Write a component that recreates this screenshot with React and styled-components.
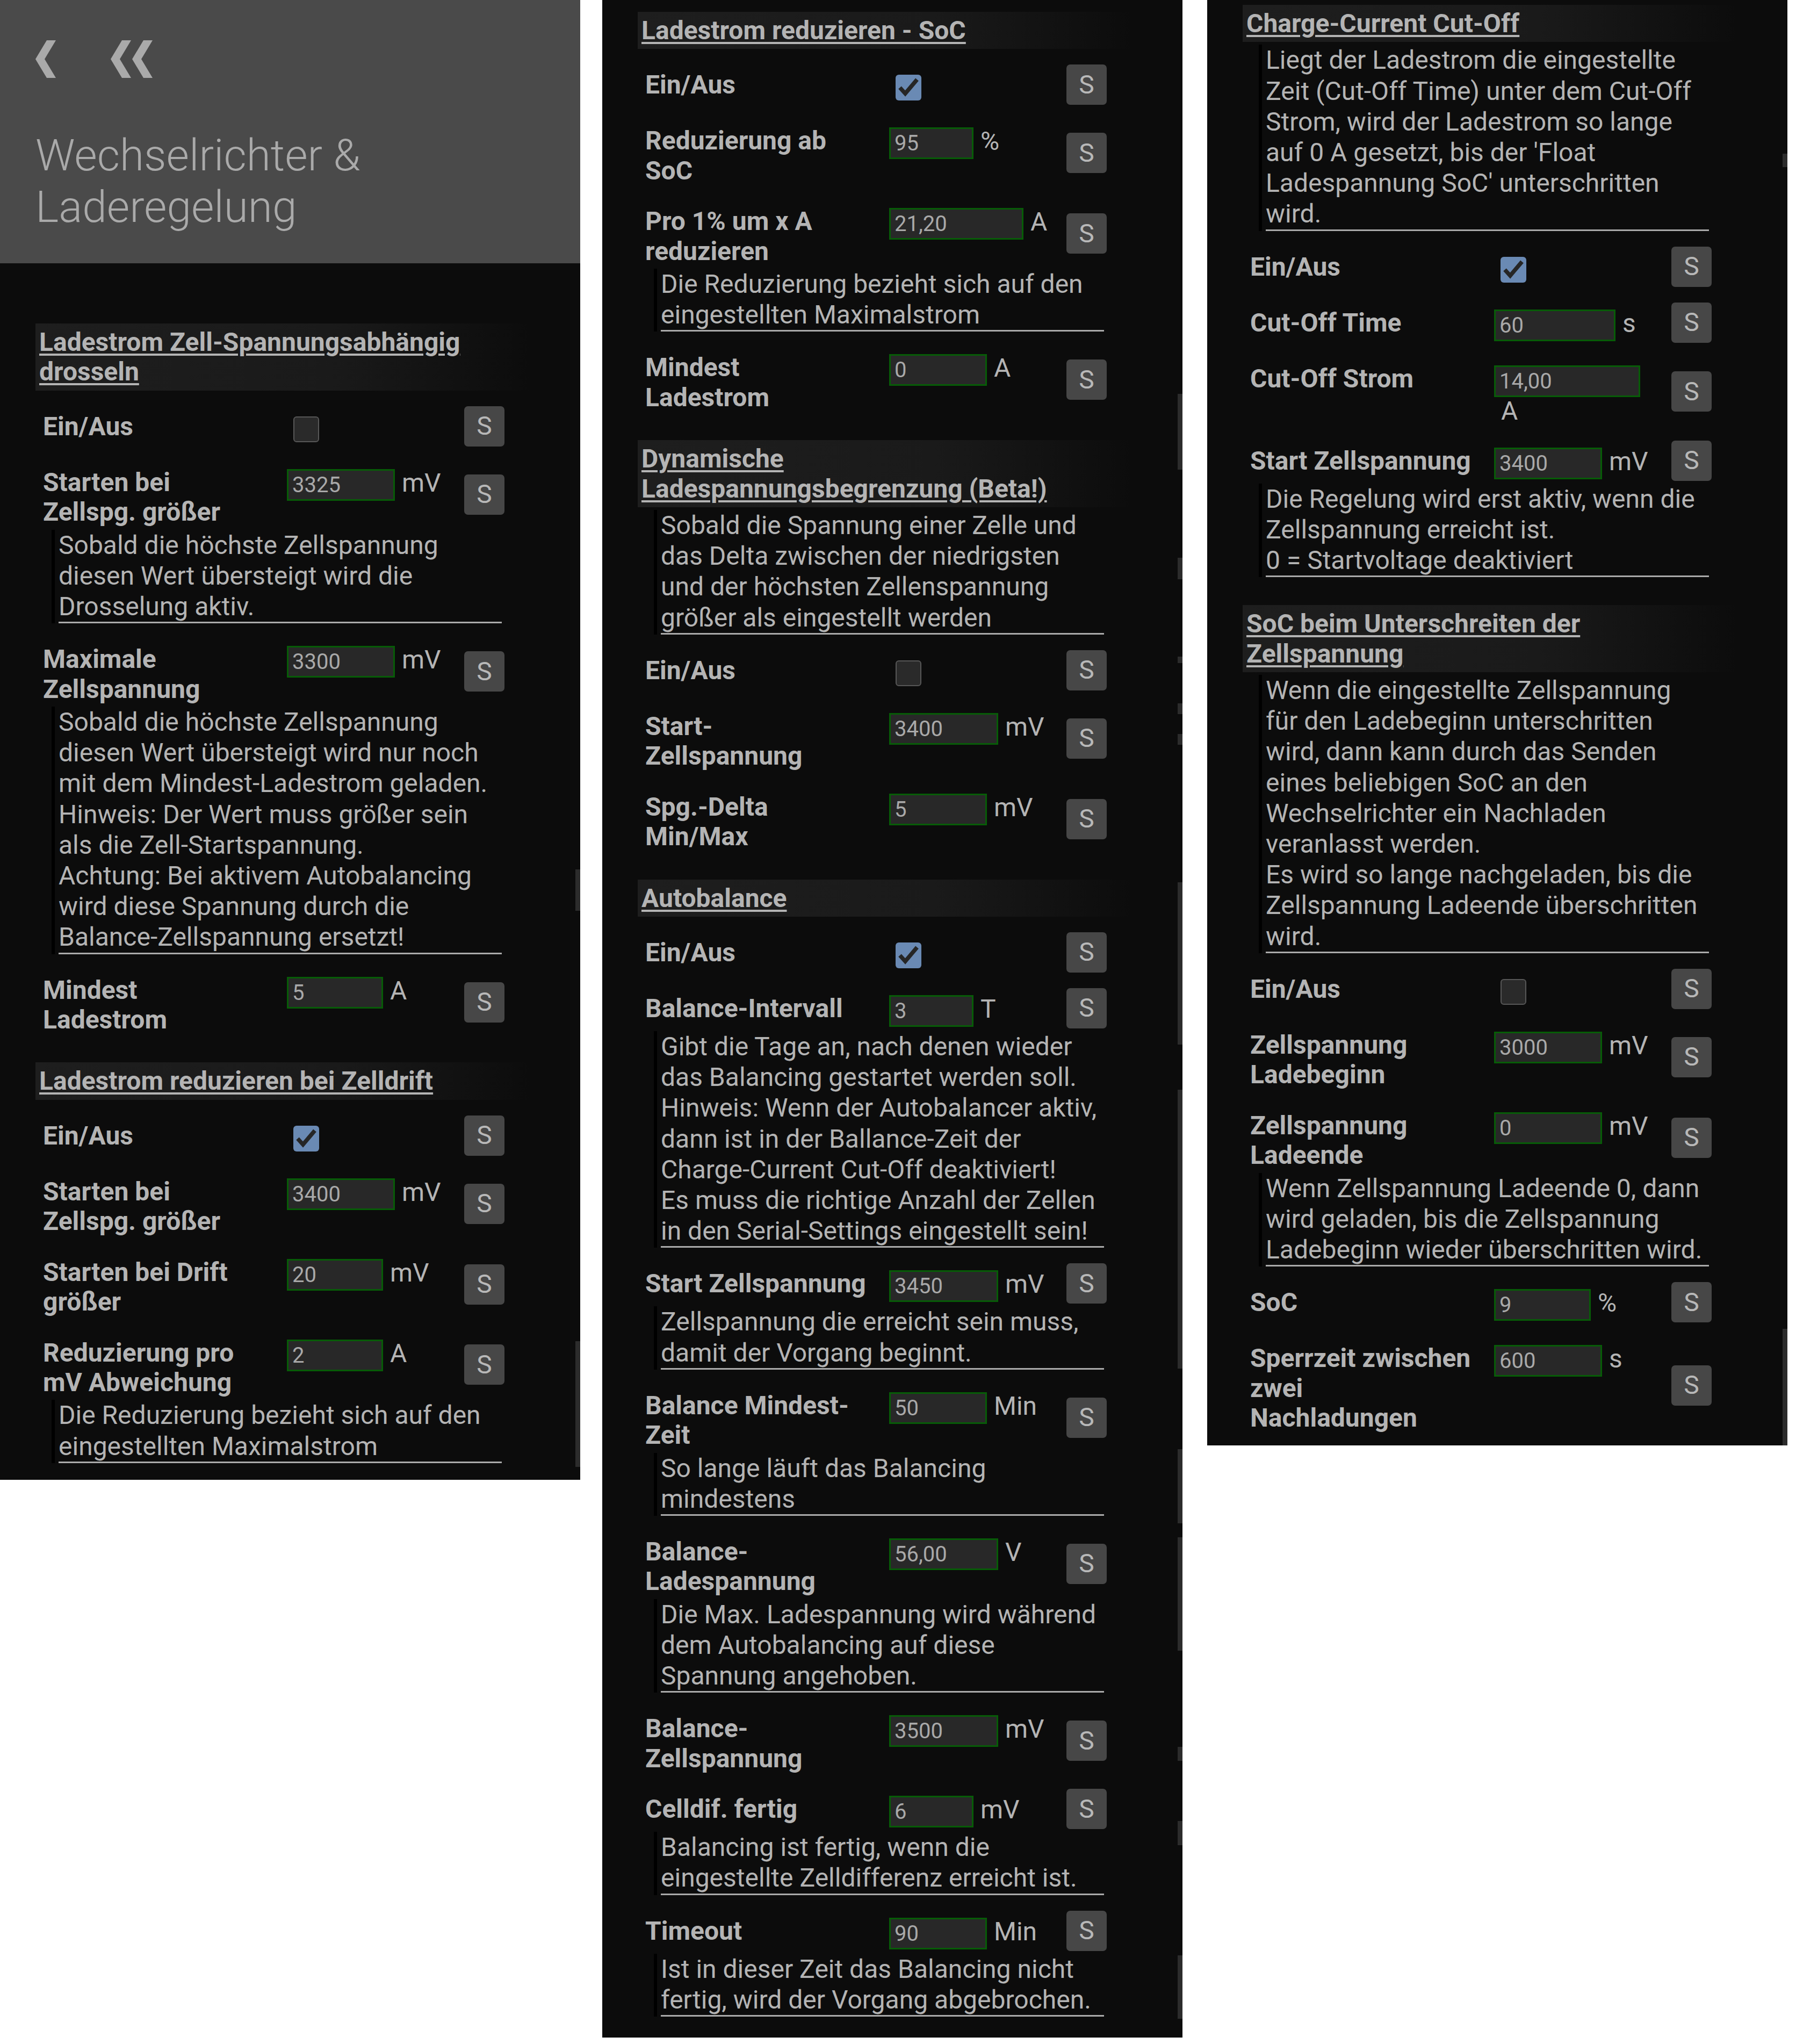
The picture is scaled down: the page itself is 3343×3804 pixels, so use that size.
import React from "react"
import styled, { createGlobalStyle } from "styled-components"

const GlobalStyle = createGlobalStyle`
  html, body {
    margin: 0;
    padding: 0;
    background: #ffffff;
  }
  body {
    font-family: Roboto, "Liberation Sans", sans-serif;
  }
`

const FONT = `Roboto, "Liberation Sans", sans-serif`

const Page = styled.div`
  display: flex;
  align-items: flex-start;
  width: 3343px;
  height: 3804px;
  background: #ffffff;
`

const Screen = styled.div`
  position: relative;
  flex: none;
  width: 1080px;
  height: ${(p) => p.height}px;
  margin-left: ${(p) => p.offset}px;
  background: #0c0c0c;
  color: #b4b4b4;
  font-family: ${FONT};
  font-size: 48px;
  overflow: hidden;
`

const TopBar = styled.header`
  height: 490px;
  box-sizing: border-box;
  background: #4a4a4a;
  padding: 75px 0 0 66px;
`

const NavIcons = styled.div`
  display: flex;
  gap: 102px;
  height: 70px;
  color: #aaaaaa;
`

const Title = styled.h1`
  margin: 96px 0 0;
  font-size: 82px;
  font-weight: 300;
  line-height: 96px;
  color: #aaaaaa;
`

const Body = styled.div`
  padding-top: ${(p) => p.top}px;
`

const SectionHead = styled.h2`
  margin: 52px 14px 0 66px;
  padding: 7px;
  font-size: 48px;
  font-weight: 700;
  line-height: 55.4px;
  white-space: nowrap;
  background: linear-gradient(90deg, #1e1e1e 0%, #1a1a1a 55%, rgba(12, 12, 12, 0) 92%);
  &:first-child {
    margin-top: 0;
  }
  span {
    text-decoration: underline;
    text-decoration-thickness: 4px;
    text-underline-offset: 5px;
  }
`

const Block = styled.div`
  margin-top: 29px;
`

const Row = styled.div`
  display: grid;
  grid-template-columns: 454px 330px 75px;
  align-items: start;
  min-height: 75px;
  padding-left: 80px;
`

const Label = styled.div`
  padding-top: 10px;
  font-weight: 700;
  line-height: 55.4px;
  white-space: nowrap;
`

const Control = styled.div`
  display: flex;
  flex-wrap: wrap;
  align-items: flex-start;
  max-width: 300px;
  margin-top: ${(p) => (p.check ? 19 : 13)}px;
  padding-left: ${(p) => (p.check ? 12 : 0)}px;
`

const ValueInput = styled.input`
  box-sizing: border-box;
  width: ${(p) => p.w}px;
  height: 59px;
  margin: 0;
  padding: 0 7px;
  border: 3px solid #075c07;
  border-radius: 0;
  background: #282828;
  color: #a9a9a9;
  font-family: ${FONT};
  font-size: 40px;
  outline: none;
`

const Unit = styled.span`
  margin-left: 13px;
  line-height: 52px;
  white-space: nowrap;
`

const Check = styled.div`
  box-sizing: border-box;
  width: 48px;
  height: 48px;
  border-radius: 6px;
  background: ${(p) => (p.on ? "#6a8ab4" : "#2a2a2a")};
  border: ${(p) => (p.on ? "none" : "2.5px solid #575757")};
  display: flex;
  align-items: center;
  justify-content: center;
`

const SaveButton = styled.div`
  align-self: center;
  width: 75px;
  height: 75px;
  border-radius: 7px;
  background: #474747;
  color: #b8b8b8;
  display: flex;
  align-items: center;
  justify-content: center;
  font-size: 48px;
  line-height: 1;
`

const Desc = styled.div`
  box-sizing: border-box;
  width: 838px;
  margin: 5px 0 0 96px;
  padding-left: 7px;
  border-left: 6px solid #000000;
`

const DescText = styled.div`
  border-bottom: 3px solid #aaaaaa;
  line-height: 57.2px;
  white-space: nowrap;
`

const ScrollMark = styled.div`
  position: absolute;
  right: 0;
  width: 9px;
  background: #2c2c2c;
`

const Chevron = ({ double }) => (
  <svg width={double ? 78 : 38} height="70" viewBox={double ? "0 0 78 70" : "0 0 38 70"}>
    <polygon points="38,0 21,0 0,35 21,70 38,70 17,35" fill="currentColor" />
    {double && <polygon points="78,0 61,0 40,35 61,70 78,70 57,35" fill="currentColor" />}
  </svg>
)

const Lines = ({ lines }) =>
  lines.map((l, i) => (
    <React.Fragment key={i}>
      {i > 0 && <br />}
      {l}
    </React.Fragment>
  ))

function Setting({ item }) {
  return (
    <Block>
      <Row>
        <Label>
          <Lines lines={item.label} />
        </Label>
        {item.check !== undefined ? (
          <Control check>
            <Check on={item.check}>
              {item.check && (
                <svg width="48" height="48" viewBox="0 0 48 48">
                  <polyline
                    points="8,24 18,35 40,9"
                    fill="none"
                    stroke="#262626"
                    strokeWidth="7.5"
                  />
                </svg>
              )}
            </Check>
          </Control>
        ) : (
          <Control>
            <ValueInput w={item.w} value={item.value} readOnly />
            <Unit>{item.unit}</Unit>
          </Control>
        )}
        <SaveButton>S</SaveButton>
      </Row>
      {item.desc && (
        <Desc>
          <DescText>
            <Lines lines={item.desc} />
          </DescText>
        </Desc>
      )}
    </Block>
  )
}

function Content({ items }) {
  return items.map((item, i) => {
    if (item.section)
      return (
        <SectionHead key={i}>
          <span>
            <Lines lines={item.section} />
          </span>
        </SectionHead>
      )
    if (item.note)
      return (
        <Desc key={i}>
          <DescText>
            <Lines lines={item.note} />
          </DescText>
        </Desc>
      )
    return <Setting key={i} item={item} />
  })
}

const onOff = (check) => ({ label: ["Ein/Aus"], check })

const screen1 = [
  { section: ["Ladestrom Zell-Spannungsabhängig", "drosseln"] },
  onOff(false),
  {
    label: ["Starten bei", "Zellspg. größer"],
    value: "3325",
    unit: "mV",
    w: 201,
    desc: ["Sobald die höchste Zellspannung", "diesen Wert übersteigt wird die", "Drosselung aktiv."],
  },
  {
    label: ["Maximale", "Zellspannung"],
    value: "3300",
    unit: "mV",
    w: 201,
    desc: [
      "Sobald die höchste Zellspannung",
      "diesen Wert übersteigt wird nur noch",
      "mit dem Mindest-Ladestrom geladen.",
      "Hinweis: Der Wert muss größer sein",
      "als die Zell-Startspannung.",
      "Achtung: Bei aktivem Autobalancing",
      "wird diese Spannung durch die",
      "Balance-Zellspannung ersetzt!",
    ],
  },
  { label: ["Mindest", "Ladestrom"], value: "5", unit: "A", w: 179 },
  { section: ["Ladestrom reduzieren bei Zelldrift"] },
  onOff(true),
  { label: ["Starten bei", "Zellspg. größer"], value: "3400", unit: "mV", w: 201 },
  { label: ["Starten bei Drift", "größer"], value: "20", unit: "mV", w: 179 },
  {
    label: ["Reduzierung pro", "mV Abweichung"],
    value: "2",
    unit: "A",
    w: 179,
    desc: ["Die Reduzierung bezieht sich auf den", "eingestellten Maximalstrom"],
  },
]

const screen2 = [
  { section: ["Ladestrom reduzieren - SoC"] },
  onOff(true),
  { label: ["Reduzierung ab", "SoC"], value: "95", unit: "%", w: 157 },
  {
    label: ["Pro 1% um x A", "reduzieren"],
    value: "21,20",
    unit: "A",
    w: 250,
    desc: ["Die Reduzierung bezieht sich auf den", "eingestellten Maximalstrom"],
  },
  { label: ["Mindest", "Ladestrom"], value: "0", unit: "A", w: 182 },
  { section: ["Dynamische", "Ladespannungsbegrenzung (Beta!)"] },
  {
    note: [
      "Sobald die Spannung einer Zelle und",
      "das Delta zwischen der niedrigsten",
      "und der höchsten Zellenspannung",
      "größer als eingestellt werden",
    ],
  },
  onOff(false),
  { label: ["Start-", "Zellspannung"], value: "3400", unit: "mV", w: 203 },
  { label: ["Spg.-Delta", "Min/Max"], value: "5", unit: "mV", w: 182 },
  { section: ["Autobalance"] },
  onOff(true),
  {
    label: ["Balance-Intervall"],
    value: "3",
    unit: "T",
    w: 157,
    desc: [
      "Gibt die Tage an, nach denen wieder",
      "das Balancing gestartet werden soll.",
      "Hinweis: Wenn der Autobalancer aktiv,",
      "dann ist in der Ballance-Zeit der",
      "Charge-Current Cut-Off deaktiviert!",
      "Es muss die richtige Anzahl der Zellen",
      "in den Serial-Settings eingestellt sein!",
    ],
  },
  {
    label: ["Start Zellspannung"],
    value: "3450",
    unit: "mV",
    w: 203,
    desc: ["Zellspannung die erreicht sein muss,", "damit der Vorgang beginnt."],
  },
  {
    label: ["Balance Mindest-", "Zeit"],
    value: "50",
    unit: "Min",
    w: 182,
    desc: ["So lange läuft das Balancing", "mindestens"],
  },
  {
    label: ["Balance-", "Ladespannung"],
    value: "56,00",
    unit: "V",
    w: 203,
    desc: ["Die Max. Ladespannung wird während", "dem Autobalancing auf diese", "Spannung angehoben."],
  },
  { label: ["Balance-", "Zellspannung"], value: "3500", unit: "mV", w: 203 },
  {
    label: ["Celldif. fertig"],
    value: "6",
    unit: "mV",
    w: 157,
    desc: ["Balancing ist fertig, wenn die", "eingestellte Zelldifferenz erreicht ist."],
  },
  {
    label: ["Timeout"],
    value: "90",
    unit: "Min",
    w: 182,
    desc: ["Ist in dieser Zeit das Balancing nicht", "fertig, wird der Vorgang abgebrochen."],
  },
]

const screen3 = [
  { section: ["Charge-Current Cut-Off"] },
  {
    note: [
      "Liegt der Ladestrom die eingestellte",
      "Zeit (Cut-Off Time) unter dem Cut-Off",
      "Strom, wird der Ladestrom so lange",
      "auf 0 A gesetzt, bis der 'Float",
      "Ladespannung SoC' unterschritten",
      "wird.",
    ],
  },
  onOff(true),
  { label: ["Cut-Off Time"], value: "60", unit: "s", w: 226 },
  { label: ["Cut-Off Strom"], value: "14,00", unit: "A", w: 272 },
  {
    label: ["Start Zellspannung"],
    value: "3400",
    unit: "mV",
    w: 201,
    desc: ["Die Regelung wird erst aktiv, wenn die", "Zellspannung erreicht ist.", "0 = Startvoltage deaktiviert"],
  },
  { section: ["SoC beim Unterschreiten der", "Zellspannung"] },
  {
    note: [
      "Wenn die eingestellte Zellspannung",
      "für den Ladebeginn unterschritten",
      "wird, dann kann durch das Senden",
      "eines beliebigen SoC an den",
      "Wechselrichter ein Nachladen",
      "veranlasst werden.",
      "Es wird so lange nachgeladen, bis die",
      "Zellspannung Ladeende überschritten",
      "wird.",
    ],
  },
  onOff(false),
  { label: ["Zellspannung", "Ladebeginn"], value: "3000", unit: "mV", w: 201 },
  {
    label: ["Zellspannung", "Ladeende"],
    value: "0",
    unit: "mV",
    w: 201,
    desc: ["Wenn Zellspannung Ladeende 0, dann", "wird geladen, bis die Zellspannung", "Ladebeginn wieder überschritten wird."],
  },
  { label: ["SoC"], value: "9", unit: "%", w: 180 },
  { label: ["Sperrzeit zwischen", "zwei", "Nachladungen"], value: "600", unit: "s", w: 201 },
]

const marks = {
  one: [
    [1618, 77],
    [2496, 234],
  ],
  two: [
    [733, 141],
    [1038, 40],
    [1222, 12],
    [1309, 20],
    [1366, 20],
    [1642, 302],
    [2028, 519],
    [2697, 138],
    [2861, 211],
    [3251, 26],
    [3389, 45],
    [3639, 118],
  ],
  three: [
    [286, 25],
    [2473, 217],
  ],
}

const Marks = ({ list }) =>
  list.map(([top, h], i) => <ScrollMark key={i} style={{ top, height: h }} />)

export default function App() {
  return (
    <>
      <GlobalStyle />
      <Page>
        <Screen height={2754} offset={0}>
          <TopBar>
            <NavIcons>
              <Chevron />
              <Chevron double />
            </NavIcons>
            <Title>
              Wechselrichter &amp;
              <br />
              Laderegelung
            </Title>
          </TopBar>
          <Body top={112}>
            <Content items={screen1} />
          </Body>
          <Marks list={marks.one} />
        </Screen>
        <Screen height={3792} offset={41}>
          <Body top={22}>
            <Content items={screen2} />
          </Body>
          <Marks list={marks.two} />
        </Screen>
        <Screen height={2690} offset={46}>
          <Body top={9}>
            <Content items={screen3} />
          </Body>
          <Marks list={marks.three} />
        </Screen>
      </Page>
    </>
  )
}
